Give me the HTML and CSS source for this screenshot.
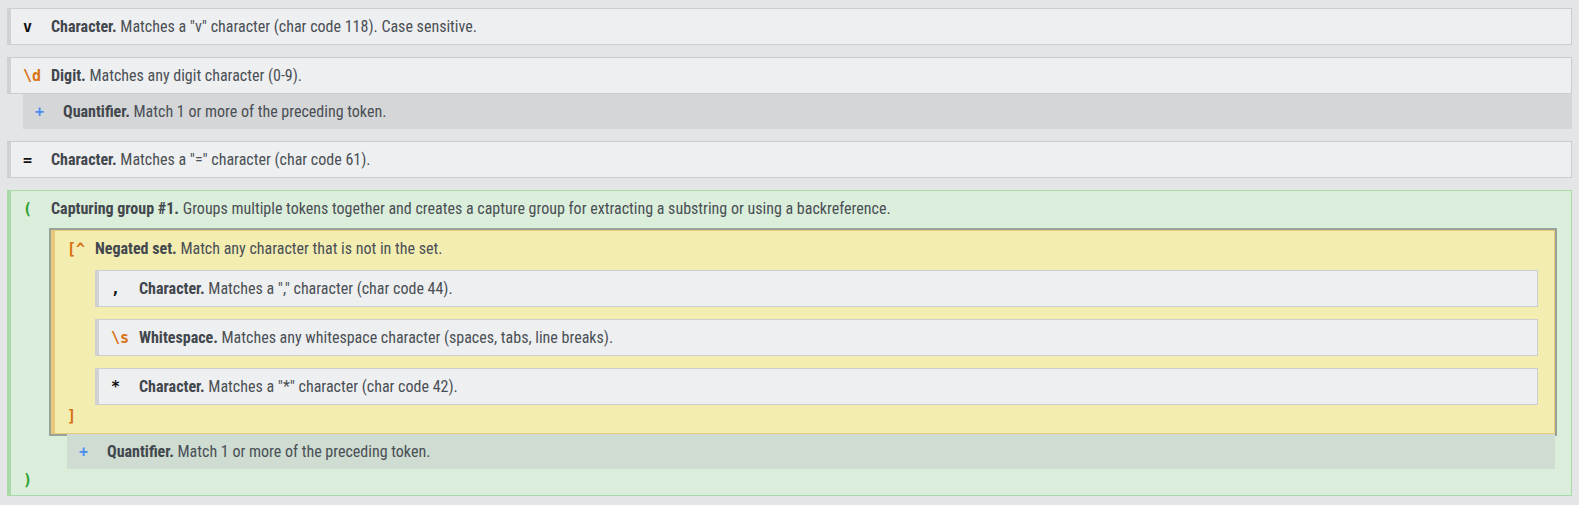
FILE: index.html
```html
<!DOCTYPE html>
<html>
<head>
<meta charset="utf-8">
<link rel="stylesheet" href="styles.css">
</head>
<body>
<div class="expl">
  <div class="node">
    <div class="head"><span class="tok">v</span><span class="desc"><b>Character.</b> Matches a "v" character (char code 118). Case sensitive.</span></div>
  </div>

  <div class="item">
    <div class="node">
      <div class="head"><span class="tok esc">\d</span><span class="desc"><b>Digit.</b> Matches any digit character (0-9).</span></div>
    </div>
    <div class="quant head"><span class="tok q">+</span><span class="desc"><b>Quantifier.</b> Match 1 or more of the preceding token.</span></div>
  </div>

  <div class="node">
    <div class="head"><span class="tok">=</span><span class="desc"><b>Character.</b> Matches a "=" character (char code 61).</span></div>
  </div>

  <div class="node group">
    <div class="head"><span class="tok grp">(</span><span class="desc"><b>Capturing group #1.</b> Groups multiple tokens together and creates a capture group for extracting a substring or using a backreference.</span></div>
    <div class="kids">
      <div class="item">
        <div class="node set">
          <div class="head"><span class="tok esc">[^</span><span class="desc"><b>Negated set.</b> Match any character that is not in the set.</span></div>
          <div class="kids">
            <div class="node">
              <div class="head"><span class="tok">,</span><span class="desc"><b>Character.</b> Matches a "," character (char code 44).</span></div>
            </div>
            <div class="node">
              <div class="head"><span class="tok esc">\s</span><span class="desc"><b>Whitespace.</b> Matches any whitespace character (spaces, tabs, line breaks).</span></div>
            </div>
            <div class="node">
              <div class="head"><span class="tok">*</span><span class="desc"><b>Character.</b> Matches a "*" character (char code 42).</span></div>
            </div>
          </div>
          <div class="foot"><span class="tok esc">]</span></div>
        </div>
        <div class="quant head"><span class="tok q">+</span><span class="desc"><b>Quantifier.</b> Match 1 or more of the preceding token.</span></div>
      </div>
    </div>
    <div class="foot foot-group"><span class="tok grp">)</span></div>
  </div>
</div>
</body>
</html>
```

FILE: styles.css
```css
html, body {
  margin: 0;
  padding: 0;
  background: #e4e5e7;
}

.expl {
  padding: 8px 7px 0 7px;
  display: flex;
  flex-direction: column;
  gap: 12px;
  font-family: "Roboto Condensed", Roboto, "Liberation Sans Narrow", sans-serif;
  font-stretch: condensed;
  font-size: 16px;
  color: #4a4f55;
}

.item {
  display: flex;
  flex-direction: column;
}

.node {
  background: #eeeff1;
  border: 1px solid #cbcdd1;
  border-left: 4px solid #d0d1d4;
}

.head {
  height: 35px;
  display: flex;
  align-items: center;
  padding-left: 12px;
  white-space: nowrap;
}

.desc b {
  font-weight: 700;
  color: #42474d;
}

.tok {
  flex: none;
  width: 28px;
  font-family: "DejaVu Sans Mono", "Liberation Mono", monospace;
  font-stretch: normal;
  font-weight: 700;
  font-size: 15px;
  color: #111;
}

.tok.esc {
  color: #d87211;
}

.tok.q {
  color: #4b8ef3;
}

.tok.grp {
  color: #2ea12e;
}

.quant {
  margin-left: 16px;
  background: #d5d6d8;
}

.group .quant {
  background: #cedcd1;
}

.kids {
  display: flex;
  flex-direction: column;
  gap: 12px;
  margin: 4px 16px 0 40px;
}

.foot {
  height: 21px;
  display: flex;
  align-items: center;
  padding-left: 12px;
  padding-bottom: 7px;
}

.foot-group {
  padding-bottom: 5px;
}

.group {
  background: #dbeedb;
  border-color: #a9d9a6;
}

.set {
  background: #f3edb1;
  border-color: #e8c87c;
  outline: 2px solid #98a398;
}
```
